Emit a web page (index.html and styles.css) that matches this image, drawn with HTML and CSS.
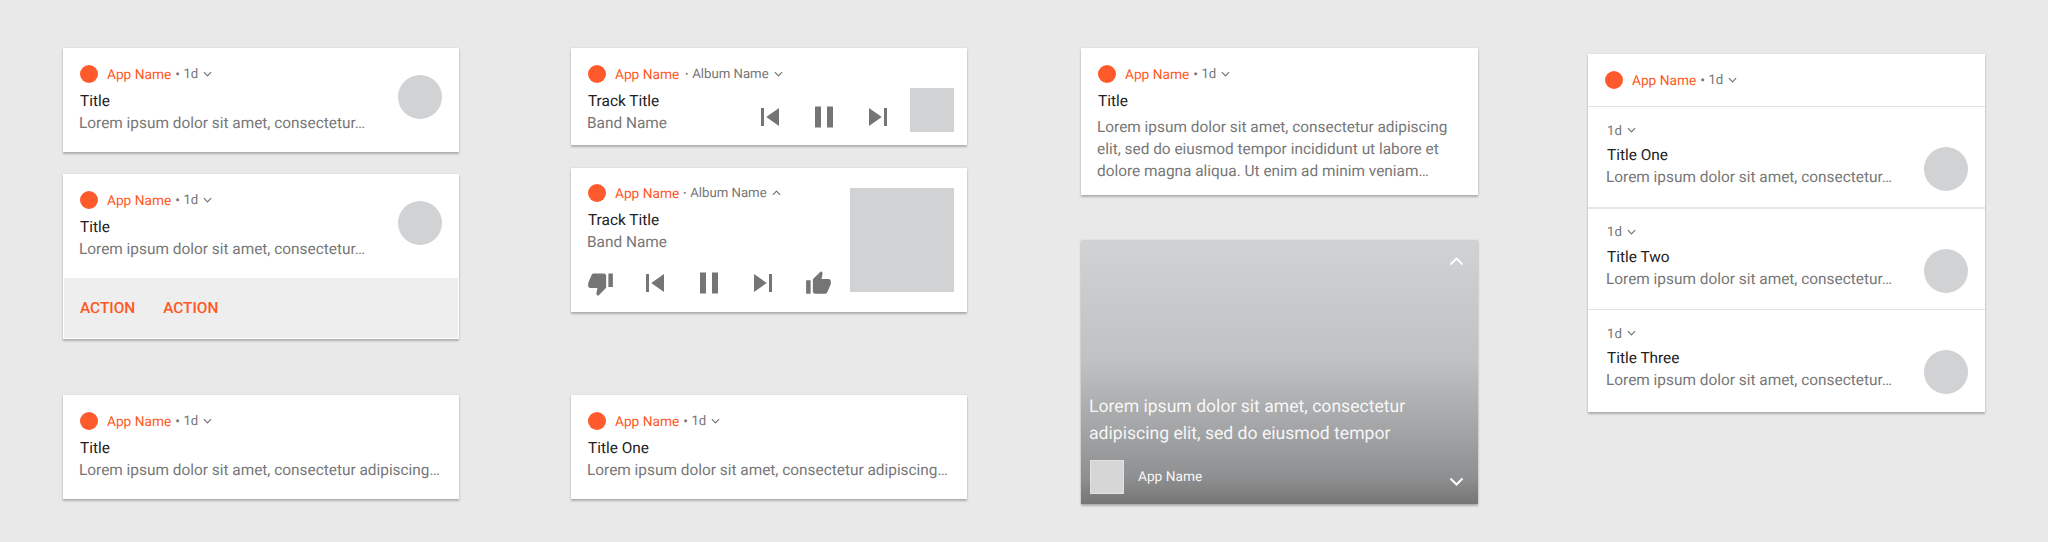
FILE: index.html
```html
<!DOCTYPE html>
<html lang="en">
<head>
<meta charset="utf-8">
<title>Notifications</title>
<link rel="stylesheet" href="styles.css">
</head>
<body>
<svg class="defs" aria-hidden="true">
  <symbol id="chev-down" viewBox="0 0 10 6"><path d="M1 1l4 4 4-4" fill="none" stroke="currentColor" stroke-width="1.3"/></symbol>
  <symbol id="chev-up" viewBox="0 0 10 6"><path d="M1 5l4-4 4 4" fill="none" stroke="currentColor" stroke-width="1.3"/></symbol>
  <symbol id="prev" viewBox="0 0 24 24"><path d="M6 6h2v12H6zm3.5 6l8.5 6V6z"/></symbol>
  <symbol id="pause" viewBox="0 0 24 24"><path d="M6 19h4V5H6v14zm8-14v14h4V5h-4z"/></symbol>
  <symbol id="next" viewBox="0 0 24 24"><path d="M6 18l8.5-6L6 6v12zM16 6v12h2V6h-2z"/></symbol>
  <symbol id="thumb-down" viewBox="0 0 24 24"><path d="M15 3H6c-.83 0-1.54.5-1.84 1.22l-3.02 7.05c-.09.23-.14.47-.14.73v2c0 1.1.9 2 2 2h6.31l-.95 4.57-.03.32c0 .41.17.79.44 1.06L9.83 23l6.59-6.59c.36-.36.58-.86.58-1.41V5c0-1.1-.9-2-2-2zm4 0v12h4V3h-4z"/></symbol>
  <symbol id="thumb-up" viewBox="0 0 24 24"><path d="M1 21h4V9H1v12zm22-11c0-1.1-.9-2-2-2h-6.31l.95-4.57.03-.32c0-.41-.17-.79-.44-1.06L14.17 1 7.59 7.59C7.22 7.95 7 8.45 7 9v10c0 1.1.9 2 2 2h9c.83 0 1.54-.5 1.84-1.22l3.02-7.05c.09-.23.14-.47.14-.73v-2z"/></symbol>
</svg>

<main class="board">
  <section class="col col-1">
    <article class="card note">
      <div class="note-main">
        <div class="head"><span class="badge"></span><span class="app">App Name</span><span class="sep">•</span><span class="meta">1d</span><svg class="chev"><use href="#chev-down"/></svg></div>
        <div class="title">Title</div>
        <div class="body">Lorem ipsum dolor sit amet, consectetur…</div>
      </div>
      <div class="avatar"></div>
    </article>
    <article class="card card-gap-1">
      <div class="note">
        <div class="note-main">
          <div class="head"><span class="badge"></span><span class="app">App Name</span><span class="sep">•</span><span class="meta">1d</span><svg class="chev"><use href="#chev-down"/></svg></div>
          <div class="title">Title</div>
          <div class="body">Lorem ipsum dolor sit amet, consectetur…</div>
        </div>
        <div class="avatar"></div>
      </div>
      <div class="actions"><span class="action">ACTION</span><span class="action">ACTION</span></div>
    </article>
    <article class="card note card-gap-2">
      <div class="note-main">
        <div class="head"><span class="badge"></span><span class="app">App Name</span><span class="sep">•</span><span class="meta">1d</span><svg class="chev"><use href="#chev-down"/></svg></div>
        <div class="title">Title</div>
        <div class="body">Lorem ipsum dolor sit amet, consectetur adipiscing…</div>
      </div>
    </article>
  </section>

  <section class="col col-2">
    <article class="card media">
      <div class="media-text">
        <div class="head"><span class="badge"></span><span class="app">App Name</span><span class="sep sep-album">•</span><span class="meta">Album Name</span><svg class="chev"><use href="#chev-down"/></svg></div>
        <div class="title">Track Title</div>
        <div class="body">Band Name</div>
      </div>
      <div class="controls">
        <svg class="ctl"><use href="#prev"/></svg>
        <svg class="ctl"><use href="#pause"/></svg>
        <svg class="ctl"><use href="#next"/></svg>
      </div>
      <div class="art"></div>
    </article>
    <article class="card media-big">
      <div class="media-big-main">
        <div class="head"><span class="badge"></span><span class="app">App Name</span><span class="sep sep-album-up">•</span><span class="meta">Album Name</span><svg class="chev"><use href="#chev-up"/></svg></div>
        <div class="title">Track Title</div>
        <div class="body">Band Name</div>
        <div class="controls-big">
          <svg class="thumb thumb-down"><use href="#thumb-down"/></svg>
          <svg class="ctl"><use href="#prev"/></svg>
          <svg class="ctl"><use href="#pause"/></svg>
          <svg class="ctl"><use href="#next"/></svg>
          <svg class="thumb thumb-up"><use href="#thumb-up"/></svg>
        </div>
      </div>
      <div class="art-big"></div>
    </article>
    <article class="card note card-gap-3">
      <div class="note-main">
        <div class="head"><span class="badge"></span><span class="app">App Name</span><span class="sep">•</span><span class="meta">1d</span><svg class="chev"><use href="#chev-down"/></svg></div>
        <div class="title">Title One</div>
        <div class="body">Lorem ipsum dolor sit amet, consectetur adipiscing…</div>
      </div>
    </article>
  </section>

  <section class="col col-3">
    <article class="card note note-long">
      <div class="note-main">
        <div class="head"><span class="badge"></span><span class="app">App Name</span><span class="sep">•</span><span class="meta">1d</span><svg class="chev"><use href="#chev-down"/></svg></div>
        <div class="title">Title</div>
        <div class="body body-long">Lorem ipsum dolor sit amet, consectetur adipiscing<br>elit, sed do eiusmod tempor incididunt ut labore et<br>dolore magna aliqua. Ut enim ad minim veniam…</div>
      </div>
    </article>
    <article class="card hero">
      <svg class="hero-chev hero-chev-up"><use href="#chev-up"/></svg>
      <div class="hero-text">Lorem ipsum dolor sit amet, consectetur<br>adipiscing elit, sed do eiusmod tempor</div>
      <div class="hero-foot">
        <div class="hero-icon"></div>
        <span class="hero-app">App Name</span>
        <svg class="hero-chev"><use href="#chev-down"/></svg>
      </div>
    </article>
  </section>

  <section class="col col-4">
    <article class="card">
      <div class="group-head">
        <div class="head"><span class="badge"></span><span class="app">App Name</span><span class="sep">•</span><span class="meta">1d</span><svg class="chev"><use href="#chev-down"/></svg></div>
      </div>
      <div class="row row-first">
        <div class="note-main">
          <div class="row-time"><span class="meta">1d</span><svg class="chev"><use href="#chev-down"/></svg></div>
          <div class="title">Title One</div>
          <div class="body">Lorem ipsum dolor sit amet, consectetur…</div>
        </div>
        <div class="avatar avatar-row"></div>
      </div>
      <div class="row">
        <div class="note-main">
          <div class="row-time"><span class="meta">1d</span><svg class="chev"><use href="#chev-down"/></svg></div>
          <div class="title">Title Two</div>
          <div class="body">Lorem ipsum dolor sit amet, consectetur…</div>
        </div>
        <div class="avatar avatar-row"></div>
      </div>
      <div class="row row-last">
        <div class="note-main">
          <div class="row-time"><span class="meta">1d</span><svg class="chev"><use href="#chev-down"/></svg></div>
          <div class="title">Title Three</div>
          <div class="body">Lorem ipsum dolor sit amet, consectetur…</div>
        </div>
        <div class="avatar avatar-row"></div>
      </div>
    </article>
  </section>
</main>
</body>
</html>
```

FILE: styles.css
```css
* { box-sizing: border-box; }
html, body { margin: 0; padding: 0; }
body {
  background: #e9e9e9;
  font-family: Roboto, "Noto Sans", sans-serif;
  text-rendering: geometricPrecision;
  color: #212121;
  height: 542px;
  overflow: hidden;
}
.defs { width: 0; height: 0; position: absolute; }

.board { display: flex; align-items: flex-start; padding: 48px 0 0 63px; }
.col { display: flex; flex-direction: column; width: 396px; flex: none; }
.col-2 { margin-left: 112px; }
.col-3 { margin-left: 114px; width: 397px; }
.col-4 { margin-left: 110px; width: 397px; padding-top: 6px; }

.card {
  background: #fff;
  box-shadow: 0 2px 2px rgba(0, 0, 0, .24), 0 0 2px rgba(0, 0, 0, .1);
  flex: none;
}
.card-gap-1 { margin-top: 22px; }
.card-gap-2 { margin-top: 56px; }
.card-gap-3 { margin-top: 83px; }

.head { display: flex; align-items: center; height: 18px; line-height: 18px; white-space: nowrap; }
.badge { width: 18px; height: 18px; border-radius: 50%; background: #ff5a2c; margin-right: 9px; flex: none; }
.app { color: #ff5722; font-size: 13.7px; padding-top: 2px; }
.sep { color: #757575; font-size: 14px; margin: 0 3.5px 0 4px; padding-top: 2px; }
.sep-album { margin: 0 4px 0 6px; font-size: 9px; }
.sep-album-up { margin: 0 4px 0 4px; font-size: 9px; }
.meta { color: #757575; font-size: 13.2px; padding-top: 2px; }
.chev { width: 9px; height: 6px; margin-left: 5px; color: #757575; flex: none; }

.title { font-size: 15.4px; line-height: 22px; margin-top: 7px; color: #212121; }
.body { font-size: 15.4px; line-height: 22px; color: #777; white-space: nowrap; margin-left: -1px; }
.body-long { margin-top: 4px; }

.note { display: flex; align-items: flex-start; padding: 17px 17px 0; height: 104px; }
.note-long { height: 147px; }
.note-main { flex: 1; min-width: 0; }
.avatar { width: 44px; height: 44px; border-radius: 50%; background: #d1d2d4; margin-top: 10px; flex: none; }

.actions { display: flex; gap: 28px; height: 61px; align-items: center; padding: 0 16px; background: #eee; border: 1px solid #fff; border-top: 0; }
.action { color: #ff5722; font-size: 15.4px; font-weight: 500; }

.media { display: flex; align-items: flex-start; height: 97px; padding: 17px 13px 0 17px; }
.media-text { flex: 1; min-width: 0; }
.controls { display: flex; gap: 18px; margin-top: 34px; margin-right: 14px; }
.ctl { width: 36px; height: 36px; fill: #757575; flex: none; }
.art { width: 44px; height: 44px; background: #d1d2d4; margin-top: 23px; flex: none; }

.media-big { display: flex; align-items: flex-start; height: 144px; margin-top: 23px; padding: 16px 13px 0 17px; }
.media-big-main { flex: 1; min-width: 0; }
.controls-big { display: flex; align-items: center; gap: 18px; margin-top: 12px; height: 36px; }
.thumb { width: 27px; height: 27px; fill: #757575; flex: none; }
.thumb-down { margin: 0 5px 0 -1px; }
.thumb-up { margin-left: 6px; }
.art-big { width: 104px; height: 104px; background: #d1d2d4; margin-top: 4px; flex: none; }

.hero {
  display: flex;
  flex-direction: column;
  height: 264px;
  margin-top: 45px;
  padding: 17px 14px 10px 9px;
  background: linear-gradient(#d1d2d4 0%, #c0c1c2 46%, #b2b3b4 58%, #a0a1a2 75%, #8e8f90 90%, #757575 100%);
  color: #fff;
}
.hero-chev { width: 15px; height: 9px; color: #fff; flex: none; }
.hero-chev-up { align-self: flex-end; }
.hero-text { font-size: 17.6px; line-height: 27px; color: rgba(255, 255, 255, .92); margin: 128px 0 0 -1px; white-space: nowrap; }
.hero-foot { display: flex; align-items: center; margin-top: 12px; }
.hero-icon { width: 34px; height: 34px; background: #d6d6d6; border: 1px solid #e2e2e2; flex: none; }
.hero-app { font-size: 13.7px; margin-left: 14px; flex: 1; color: rgba(255, 255, 255, .95); }
.hero-foot .hero-chev { margin-top: 8px; }

.group-head { height: 53px; padding: 17px 17px 0; border-bottom: 1px solid #e2e2e2; }
.row { display: flex; align-items: flex-start; height: 101.5px; padding: 14px 17px 0 19px; border-bottom: 1px solid #e2e2e2; }
.row-first { border-bottom: 2px solid #e8e8e8; }
.row-last { border-bottom: 0; }
.row-time { display: flex; align-items: center; height: 18px; }
.row .title { margin-top: 5px; }
.avatar-row { margin-top: 26px; }
```
